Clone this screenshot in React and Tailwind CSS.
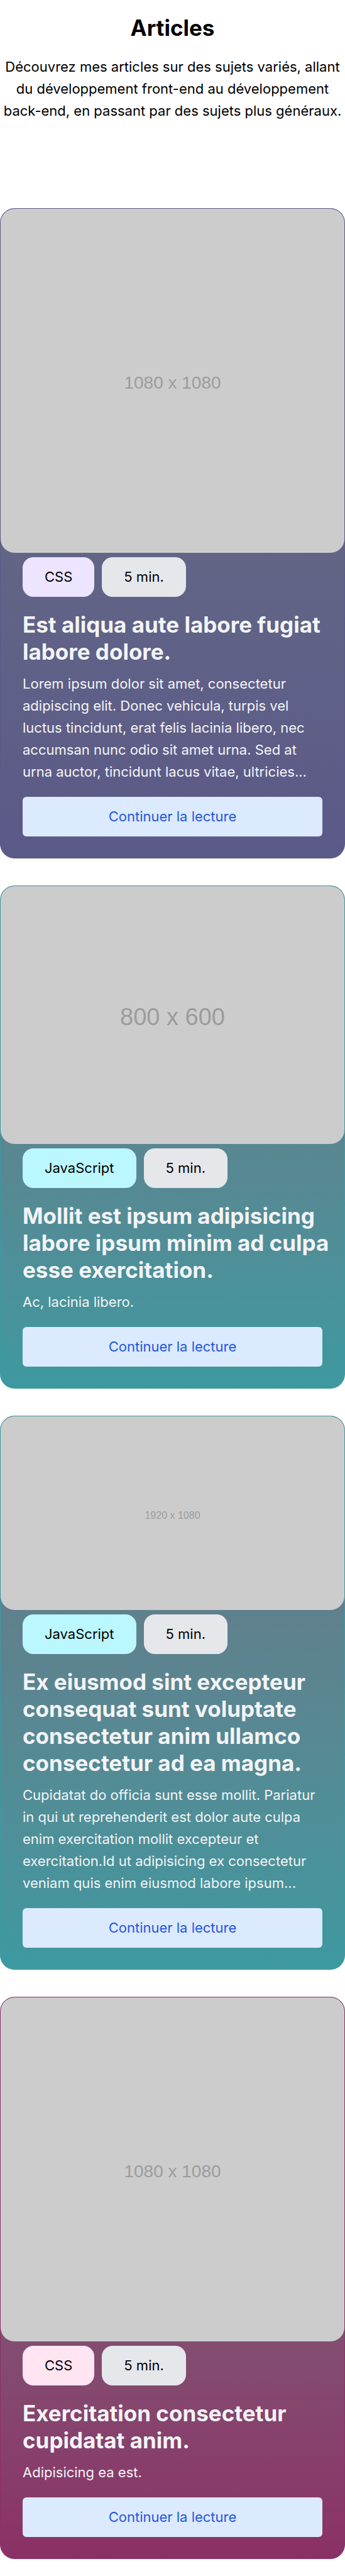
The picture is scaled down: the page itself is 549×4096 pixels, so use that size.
const articles = [
  {
    title: "Est aliqua aute labore fugiat labore dolore.",
    text: "Lorem ipsum dolor sit amet, consectetur adipiscing elit. Donec vehicula, turpis vel luctus tincidunt, erat felis lacinia libero, nec accumsan nunc odio sit amet urna. Sed at urna auctor, tincidunt lacus vitae, ultricies...",
    tag: "CSS",
    tagStyle: "bg-[#ede4ff]",
    cardStyle: "border-[#5b5988] to-[#5b5988]",
    size: "1080 x 1080",
    imageStyle: "aspect-square text-[28px]",
  },
  {
    title: "Mollit est ipsum adipisicing labore ipsum minim ad culpa esse exercitation.",
    text: "Ac, lacinia libero.",
    tag: "JavaScript",
    tagStyle: "bg-[#bbf7ff]",
    cardStyle: "border-[#3d99a0] to-[#3d99a0]",
    size: "800 x 600",
    imageStyle: "aspect-4/3 text-[38px]",
  },
  {
    title: "Ex eiusmod sint excepteur consequat sunt voluptate consectetur anim ullamco consectetur ad ea magna.",
    text: "Cupidatat do officia sunt esse mollit. Pariatur in qui ut reprehenderit est dolor aute culpa enim exercitation mollit excepteur et exercitation.Id ut adipisicing ex consectetur veniam quis enim eiusmod labore ipsum...",
    tag: "JavaScript",
    tagStyle: "bg-[#bbf7ff]",
    cardStyle: "border-[#3d99a0] to-[#3d99a0]",
    size: "1920 x 1080",
    imageStyle: "aspect-video text-[16px]",
  },
  {
    title: "Exercitation consectetur cupidatat anim.",
    text: "Adipisicing ea est.",
    tag: "CSS",
    tagStyle: "bg-[#ffe4f2]",
    cardStyle: "border-[#8b3066] to-[#8b3066]",
    size: "1080 x 1080",
    imageStyle: "aspect-square text-[28px]",
  },
];

function Tag({ className, children }) {
  return (
    <li className={`rounded-[17px] px-[35px] py-[14px] ${className}`}>{children}</li>
  );
}

function ArticleCard({ article }) {
  return (
    <article
      className={`overflow-hidden rounded-[23px] border bg-linear-to-b from-gray-500 ${article.cardStyle}`}
    >
      <div
        className={`flex items-center justify-center rounded-[22px] bg-[#cccccc] pt-[6px] font-['Liberation_Sans',Arial,sans-serif] text-[#9c9c9c] ${article.imageStyle}`}
      >
        {article.size}
      </div>
      <div className="px-[35px] pt-[7px] pb-[34px]">
        <ul className="flex gap-[12px]">
          <Tag className={article.tagStyle}>{article.tag}</Tag>
          <Tag className="bg-[#e5e7eb]">5 min.</Tag>
        </ul>
        <h2 className="-mr-[12px] mt-[23px] text-[35px] leading-[43px] font-bold text-gray-100">
          {article.title}
        </h2>
        <p className="mt-[12px] text-gray-100">{article.text}</p>
        <a
          href="#"
          className="mt-[22px] block rounded-[6px] bg-blue-100 py-[14px] text-center text-[#2657e0]"
        >
          Continuer la lecture
        </a>
      </div>
    </article>
  );
}

export default function App() {
  return (
    <main className="bg-white pb-[25px] font-[Inter,sans-serif] text-[22px] leading-[35px] text-black">
      <header className="pt-[23px] text-center">
        <h1 className="text-[35px] leading-[43px] font-bold">Articles</h1>
        <p className="mt-[23px]">
          Découvrez mes articles sur des sujets variés, allant du développement front-end au
          développement back-end, en passant par des sujets plus généraux.
        </p>
      </header>
      <section className="mt-[137px] flex flex-col gap-[43px]">
        {articles.map((article) => (
          <ArticleCard key={article.title} article={article} />
        ))}
      </section>
    </main>
  );
}
